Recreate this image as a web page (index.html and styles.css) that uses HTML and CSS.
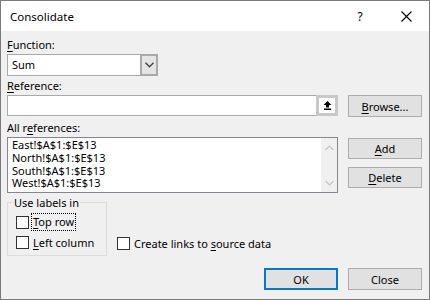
FILE: index.html
```html
<!DOCTYPE html>
<html>
<head>
<meta charset="utf-8">
<link rel="stylesheet" href="styles.css">
</head>
<body>
<div class="dialog">
  <div class="titlebar">
    <span class="title">Consolidate</span>
    <span class="help">?</span>
    <span class="close-x">
      <svg width="11" height="11" viewBox="0 0 11 11"><path d="M0.5 0.5 L10.5 10.5 M10.5 0.5 L0.5 10.5" stroke="#000" stroke-width="1.1" fill="none"/></svg>
    </span>
  </div>
  <div class="content">
    <div class="label lbl-function"><u>F</u>unction:</div>
    <div class="combo">
      <div class="combo-value">Sum</div>
      <div class="combo-btn">
        <svg width="9" height="6" viewBox="0 0 9 6"><path d="M0.5 0.8 L4.5 4.8 L8.5 0.8" stroke="#404040" stroke-width="1.3" fill="none"/></svg>
      </div>
    </div>
    <div class="label lbl-ref"><u>R</u>eference:</div>
    <div class="row row-ref">
      <div class="ref-input">
        <div class="ref-field"></div>
        <div class="ref-btn">
          <svg width="9" height="9" viewBox="0 0 9 9"><path d="M4.5 0 L8.5 4 L6 4 L6 6.5 L3 6.5 L3 4 L0.5 4 Z" fill="#000"/><rect x="1" y="7.5" width="7" height="1.5" fill="#000"/></svg>
        </div>
      </div>
      <div class="btn"><span><u>B</u>rowse...</span></div>
    </div>
    <div class="label lbl-all">All r<u>e</u>ferences:</div>
    <div class="row row-list">
      <div class="listbox">
        <div class="list-items">
          <div>East!$A$1:$E$13</div>
          <div>North!$A$1:$E$13</div>
          <div>South!$A$1:$E$13</div>
          <div>West!$A$1:$E$13</div>
        </div>
        <div class="scrollbar">
          <svg width="9" height="6" viewBox="0 0 9 6"><path d="M0.5 5 L4.5 1 L8.5 5" stroke="#c4c4c4" stroke-width="1.2" fill="none"/></svg>
          <svg width="9" height="6" viewBox="0 0 9 6"><path d="M0.5 1 L4.5 5 L8.5 1" stroke="#c4c4c4" stroke-width="1.2" fill="none"/></svg>
        </div>
      </div>
      <div class="side-btns">
        <div class="btn btn-add"><span><u>A</u>dd</span></div>
        <div class="btn btn-del"><span><u>D</u>elete</span></div>
      </div>
    </div>
    <div class="row row-options">
      <fieldset class="group">
        <legend>Use labels in</legend>
        <div class="check check-top"><span class="box"></span><span class="focus"><u>T</u>op row</span></div>
        <div class="check"><span class="box"></span><span><u>L</u>eft column</span></div>
      </fieldset>
      <div class="check check-links"><span class="box"></span><span>Create links to <u>s</u>ource data</span></div>
    </div>
    <div class="row row-footer">
      <div class="btn btn-ok">OK</div>
      <div class="btn">Close</div>
    </div>
  </div>
</div>
</body>
</html>
```
FILE: styles.css
```css
* { box-sizing: border-box; }
html, body { margin: 0; padding: 0; }
body {
  font-family: "Noto Sans", "Open Sans", "Liberation Sans", sans-serif;
  font-size: 11px;
  color: #000;
  background: #f0f0f0;
}
u { text-decoration: underline; text-underline-offset: 2px; }
.dialog {
  width: 430px;
  height: 300px;
  border: 1px solid #7a7a7a;
  background: #f0f0f0;
  overflow: hidden;
}
.titlebar {
  height: 30px;
  background: #fff;
  display: flex;
  align-items: center;
  padding-left: 9px;
}
.title { flex: 1; font-size: 11.5px; }
.help { width: 20px; margin-right: 31px; text-align: center; font-size: 12px; }
.close-x { width: 11px; margin-right: 17px; display: flex; }
.content {
  padding: 6px 7px 0 6px;
}
.label { height: 15px; line-height: 15px; }
.combo {
  margin-top: 2px;
  width: 151px;
  height: 22px;
  display: flex;
  border: 1px solid #a9a9a9;
  background: #fff;
}
.combo-value { flex: 1; padding-left: 4px; line-height: 20px; }
.combo-btn {
  width: 18px;
  background: #e5e5e5;
  border: 2px solid #a9a9a9;
  margin: -1px -1px -1px 0;
  display: flex;
  align-items: center;
  justify-content: center;
}
.lbl-ref { margin-top: 2px; }
.row { display: flex; gap: 10px; }
.row-ref { margin-top: 2px; }
.ref-input {
  width: 331px;
  height: 21px;
  display: flex;
  border: 1px solid #a9a9a9;
  background: #fff;
}
.ref-field { flex: 1; }
.ref-btn {
  width: 22px;
  margin: -1px -1px -1px 0;
  border: 3px solid #c8c8c8;
  background: #fff;
  display: flex;
  align-items: center;
  justify-content: center;
}
.btn {
  width: 74px;
  height: 22px;
  background: #e1e1e1;
  border: 1px solid #adadad;
  display: flex;
  align-items: center;
  justify-content: center;
}
.lbl-all { margin-top: 3px; }
.row-list { margin-top: 2px; }
.listbox {
  width: 331px;
  height: 56px;
  border: 1px solid #828790;
  background: #fff;
  display: flex;
}
.list-items { flex: 1; padding: 1px 0 0 4px; line-height: 12.8px; }
.scrollbar {
  width: 16px;
  background: #f0f0f0;
  display: flex;
  flex-direction: column;
  justify-content: space-between;
  align-items: center;
  padding: 7px 0 6px;
}
.side-btns { display: flex; flex-direction: column; gap: 8px; padding-top: 1px; }
.btn-add, .btn-del { height: 21px; }
.row-options { margin-top: 2px; align-items: flex-end; gap: 10px; }
.group {
  margin: 0;
  width: 100px;
  border: 1px solid #dcdcdc;
  padding: 0 0 5px 5px;
}
.group legend { padding: 0 1px; line-height: 15px; }
.check { display: flex; align-items: center; gap: 4px; height: 15px; margin-left: 3px; }
.check-top { margin-top: 4px; height: 16px; }
.check + .check { margin-top: 5px; }
.box {
  width: 13px;
  height: 13px;
  border: 1px solid #333;
  background: #fff;
  flex: none;
}
.focus { outline: 1px dotted #000; outline-offset: 0; padding: 0 1px 1px; margin-left: -1px; }
.check-links { margin: 0 0 5px 0; }
.row-footer { justify-content: flex-end; margin-top: 12px; }
.btn-ok { border: 2px solid #0078d7; }
```
